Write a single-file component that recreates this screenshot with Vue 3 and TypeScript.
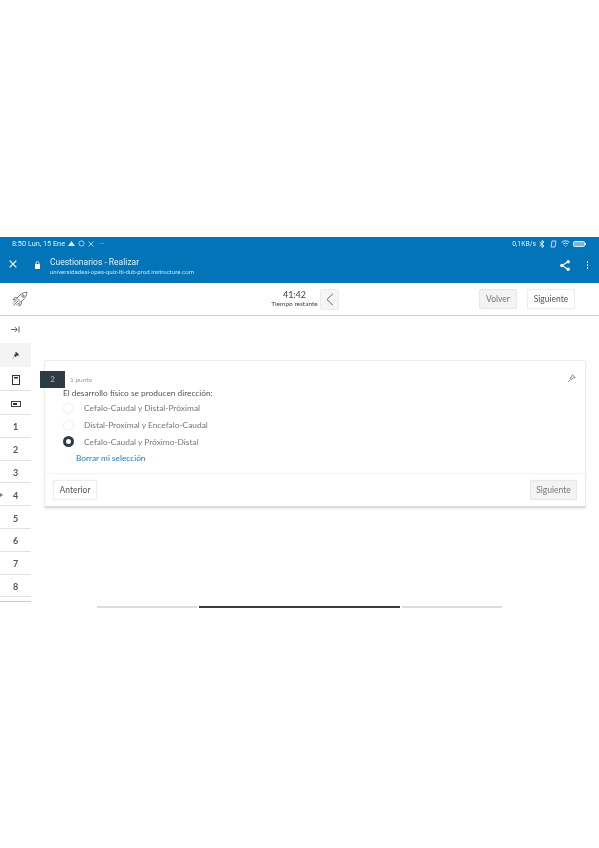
<script setup lang="ts">
const numbers: number[] = [1, 2, 3, 4, 5, 6, 7, 8]
const options = [
  { text: 'Cefalo-Caudal y Distal-Próximal', on: false },
  { text: 'Distal-Proximal y Encefalo-Caudal', on: false },
  { text: 'Cefalo-Caudal y Próximo-Distal', on: true },
]
</script>

<template>
  <div class="page">
    <header class="blue">
      <div class="status">
        <div class="status-left">
          <span>8:50 Lun, 15 Ene</span>
          <svg width="7" height="5" viewBox="0 0 7 5"><path d="M0 5 3.500 0 7 5z" fill="#dcebf5" /></svg>
          <svg width="7" height="7" viewBox="0 0 7 7"><circle cx="3.500" cy="3.500" r="2.600" fill="none" stroke="#a9cde6" /></svg>
          <svg width="6" height="6" viewBox="0 0 6 6"><path d="M0.500 0.500 5.500 5.500M5.500 0.500 0.500 5.500" stroke="#a9cde6" /></svg>
          <span class="dots">···</span>
        </div>
        <div class="status-right">
          <span>0,1KB/s</span>
          <svg width="6" height="8" viewBox="0 0 6 8"><path d="M0.500 2 5 6 3 7.500V0.500L5 2 0.500 6" fill="none" stroke="#dcebf5" /></svg>
          <svg class="phone" width="7" height="8" viewBox="0 0 7 8"><path d="M1 7 2 1h4L5 7z" fill="none" stroke="#c3dcee" /></svg>
          <svg width="9" height="7" viewBox="0 0 9 7"><path d="M0.500 2.500Q4.500-1 8.500 2.500M2 4Q4.500 2 7 4M3.500 5.500 4.500 6.500 5.500 5.500" fill="none" stroke="#dcebf5" /></svg>
          <svg width="13" height="6" viewBox="0 0 13 6"><rect x="0.500" y="0.500" width="11" height="5" rx="1" fill="#7fb7dc" stroke="#dcebf5" /><rect x="12" y="2" width="1" height="2" fill="#dcebf5" /></svg>
        </div>
      </div>
      <div class="browser">
        <svg class="close" width="8" height="8" viewBox="0 0 8 8"><path d="M0.700 0.700 7.300 7.300M7.300 0.700 0.700 7.300" stroke="#fff" stroke-width="1.200" /></svg>
        <svg class="lock" width="5" height="8" viewBox="0 0 5 8"><path d="M1 3.500V2a1.500 1.500 0 0 1 3 0v1.500" fill="none" stroke="#fff" stroke-width=".8" /><rect y="3" width="5" height="5" rx=".5" fill="#fff" /></svg>
        <div class="title">
          <div class="title-main">Cuestionarios - Realizar</div>
          <div class="title-url">universidadesi-opes-quiz-lti-dub-prod.instructure.com</div>
        </div>
        <svg class="share" width="10" height="11" viewBox="0 0 10 11"><path d="M8 1.800 2 5.500 8 9.200" fill="none" stroke="#fff" stroke-width="1.100" /><circle cx="8.200" cy="1.800" r="1.700" fill="#fff" /><circle cx="1.900" cy="5.500" r="1.700" fill="#fff" /><circle cx="8.200" cy="9.200" r="1.700" fill="#fff" /></svg>
        <div class="kebab"><i></i><i></i><i></i></div>
      </div>
    </header>

    <div class="appbar">
      <svg class="rocket" width="16" height="16" viewBox="0 0 16 16" fill="none" stroke="#444" stroke-width=".7">
        <path d="M15 1C11 1.300 7.500 3.500 5 7.500L8.500 11C12.500 8.500 14.700 5 15 1Z" />
        <path d="M5.500 6.500 2.500 6.800 1 9 4.500 8.800M9.500 10.500 9.200 13.500 7 15 7.200 11.500M6 10 1.500 14.500M4 9.500 1 12.500M6.500 12 4 14.500" />
        <circle cx="11" cy="5" r="1.200" />
      </svg>
      <div class="timer">
        <div class="timer-text">
          <div class="clock">41:42</div>
          <div class="remain">Tiempo restante</div>
        </div>
        <button class="chev" type="button">
          <svg width="8" height="13" viewBox="0 0 8 13"><path d="M7 .7 1 6.500 7 12.300" fill="none" stroke="#555" stroke-width=".9" /></svg>
        </button>
      </div>
      <div class="bar-actions">
        <button class="btn grey" type="button">Volver</button>
        <button class="btn next-top" type="button">Siguiente</button>
      </div>
    </div>

    <div class="body">
      <nav class="side">
        <div class="cell tall">
          <svg width="9" height="7" viewBox="0 0 9 7"><path d="M0 3.500H6M3.800 1 6.300 3.500 3.800 6M8 0.500V6.500" fill="none" stroke="#444" stroke-width=".8" /></svg>
        </div>
        <div class="cell pin">
          <svg width="7" height="7" viewBox="0 0 7 7"><path d="M4 0 7 3 6 3.500 4.800 3 3.800 5 2 3.200 4 2.200 3.500 1ZM2.500 4.500 0.500 6.500" fill="#333" stroke="#333" stroke-width=".4" /></svg>
        </div>
        <div class="cell line icon">
          <svg width="8" height="10" viewBox="0 0 8 10"><rect x=".5" y=".5" width="7" height="9" fill="none" stroke="#333" /><rect x="2" y="2" width="4" height="1.500" fill="#333" /></svg>
        </div>
        <div class="cell line icon">
          <svg width="10" height="6" viewBox="0 0 10 6"><rect x=".5" y=".5" width="9" height="5" fill="none" stroke="#444" /><rect x="2" y="2" width="4" height="2" fill="#333" /></svg>
        </div>
        <div v-for="n in numbers" :key="n" class="cell line num">
          <span v-if="n === 4" class="mark"></span>{{ n }}
        </div>
        <div class="side-end"></div>
      </nav>

      <main class="content">
        <section class="card">
          <div class="q-head">
            <span class="badge">2</span>
            <span class="points">1 punto</span>
            <svg class="q-pin" width="9" height="9" viewBox="0 0 9 9"><path d="M5.500 .7 8.300 3.500 7.300 4 6 3.600 4.600 5.800 2.800 4 5 2.600 4.800 1.400ZM3.300 5.500 1 8" fill="none" stroke="#666" stroke-width=".7" /></svg>
          </div>
          <div class="q-body">
            <p class="question">El desarrollo físico se producen dirección:</p>
            <div class="opts">
              <label v-for="o in options" :key="o.text" class="opt">
                <span class="radio" :class="{ on: o.on }"></span>
                <span>{{ o.text }}</span>
              </label>
            </div>
            <a class="clear">Borrar mi selección</a>
          </div>
          <footer class="q-foot">
            <button class="btn prev" type="button">Anterior</button>
            <button class="btn grey next" type="button">Siguiente</button>
          </footer>
        </section>
      </main>
    </div>

    <div class="gesture">
      <span class="seg"></span>
      <span class="seg active"></span>
      <span class="seg"></span>
    </div>
  </div>
</template>

<style>
html, body { margin: 0; background: #fff; }
</style>

<style scoped>
.page {
  width: 599px;
  height: 848px;
  padding-top: 237px;
  box-sizing: border-box;
  background: #fff;
  font-family: Lato, "Liberation Sans", sans-serif;
  color: #444;
  overflow: hidden;
  display: flex;
  flex-direction: column;
  filter: blur(0.35px);
}
.blue { background: #0374b8; color: #fff; height: 46px; flex: none; }
.status {
  height: 13px;
  display: flex;
  justify-content: space-between;
  align-items: center;
  padding: 0 13px 0 12px;
  font: 7.300px Roboto, sans-serif;
  color: #e3eff7;
}
.status-left, .status-right { display: flex; align-items: center; gap: 3px; }
.status-right span { font-size: 6.800px; }
.status-right .phone { margin: 0 1px 0 2px; }
.dots { color: #a9cde6; margin-left: 2px; }
.browser { height: 33px; display: flex; align-items: center; padding-bottom: 3px; box-sizing: border-box; }
.close { margin-left: 9px; margin-top: -3px; }
.lock { margin-left: 18px; }
.title { margin-left: 10px; flex: 1; padding-top: 3px; }
.title-main { font: 8.500px/11px Roboto, sans-serif; color: #e3eff7; }
.title-url { font: 6.100px/8px Roboto, sans-serif; color: #c9e0ef; }
.share { margin-right: 17px; }
.kebab { display: flex; flex-direction: column; gap: 1.500px; margin-right: 11px; }
.kebab i { width: 1.500px; height: 1.500px; background: #fff; border-radius: 50%; }

.appbar {
  height: 33px;
  flex: none;
  box-sizing: border-box;
  border-bottom: 1px solid #cfcfcf;
  display: flex;
  align-items: center;
  position: relative;
  padding: 0 24px 0 12px;
  justify-content: space-between;
}
.timer { position: absolute; left: 271px; top: 6px; display: flex; gap: 2px; }
.timer-text { text-align: center; width: 47px; padding-top: 1px; }
.clock { font: 9px/10px Lato, sans-serif; color: #444; }
.remain { font: 6.500px/8px Lato, sans-serif; color: #444; white-space: nowrap; }
.chev {
  width: 19px; height: 21px; padding: 0;
  display: flex; align-items: center; justify-content: center;
  background: #f5f5f5; border: 1px solid #ececec; border-radius: 2px;
}
.bar-actions { display: flex; gap: 10px; }
.btn {
  font: 8.500px Lato, sans-serif;
  color: #555;
  height: 20px;
  padding: 0;
  background: #fff;
  border: 1px solid #eee;
  border-radius: 2px;
  box-shadow: 0 0 1px #e4e4e4;
}
.btn.grey { background: #f3f3f3; border-color: #e8e8e8; color: #777; }
.bar-actions .grey { width: 38px; }
.next-top { width: 48px; color: #555; }

.body { display: flex; flex: none; height: 286px; }
.side { width: 31px; flex: none; display: flex; flex-direction: column; }
.cell {
  height: 23px;
  flex: none;
  display: flex;
  align-items: center;
  justify-content: center;
  position: relative;
  box-sizing: border-box;
}
.tall { height: 27px; }
.pin { height: 24px; background: #f4f4f4; }
.line { border-bottom: 1px solid #e2e2e2; }
.icon { height: 24px; padding-top: 2px; }
.num { font: 700 9px Lato, sans-serif; color: #555; height: 22.800px; padding-top: 2px; }
.mark {
  position: absolute; left: 0; top: 10px;
  width: 0; height: 0;
  border-left: 3px solid #777; border-top: 2px solid transparent; border-bottom: 2px solid transparent;
}
.side-end { height: 4px; border-bottom: 1px solid #ccc; }

.content { flex: 1; padding: 44px 13px 0 13px; }
.card {
  height: 148px;
  box-sizing: border-box;
  background: #fff;
  border: 1px solid #ececec;
  border-bottom: 2px solid #ddd;
  border-radius: 2px;
  box-shadow: 0 1px 2px #e8e8e8;
  display: flex;
  flex-direction: column;
}
.q-head { height: 27px; flex: none; display: flex; align-items: center; padding-top: 9px; box-sizing: border-box; position: relative; }
.badge {
  margin-left: -5px;
  width: 25px; height: 17px;
  background: #2d3b45; color: #9aa5ac;
  display: flex; align-items: center; justify-content: center;
  font: 700 8px Lato, sans-serif;
}
.points { margin-left: 5px; font: 6.500px Lato, sans-serif; color: #999; }
.q-pin { margin-left: auto; margin-right: 9px; margin-top: -2px; }
.q-body { flex: 1; padding-left: 18px; }
.question { margin: 0; font: 8.300px/11px Lato, sans-serif; color: #555; }
.opts { display: flex; flex-direction: column; margin-top: 1px; }
.opt {
  height: 16.800px;
  display: flex;
  align-items: center;
  font: 8.400px Lato, sans-serif;
  color: #777;
}
.radio {
  width: 11px; height: 11px;
  flex: none;
  margin-right: 10px;
  box-sizing: border-box;
  border: 1px solid #eee;
  border-radius: 50%;
  background: #fff;
}
.radio.on { border: 3.200px solid #2d3b45; }
.clear { display: block; margin: 3px 0 0 13px; font: 8.300px/11px Lato, sans-serif; color: #1b80bd; }
.q-foot {
  height: 33px;
  flex: none;
  box-sizing: border-box;
  border-top: 1px solid #f3f3f3;
  display: flex;
  justify-content: space-between;
  align-items: center;
  padding: 0 8px;
}
.prev { width: 44px; }
.next { width: 47px; }

.gesture { display: flex; gap: 2px; justify-content: center; margin-top: 4px; }
.seg { width: 100px; height: 2px; background: #ddd; }
.seg.active { width: 201px; background: #3a3a3a; }
</style>
